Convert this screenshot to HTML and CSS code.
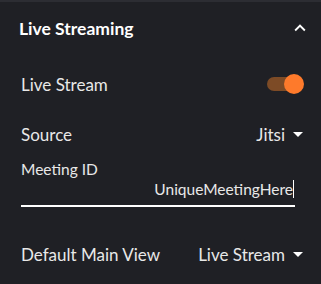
FILE: index.html
```html
<!DOCTYPE html>
<html>
<head>
<meta charset="utf-8">
<link rel="stylesheet" href="styles.css">
</head>
<body>
<div class="panel">
  <div class="header">
    <span class="title">Live Streaming</span>
    <svg class="chev" viewBox="0 0 24 24" width="22" height="22"><path d="M12 8l-6 6 1.41 1.41L12 10.83l4.59 4.58L18 14z" fill="#fff"/></svg>
  </div>
  <div class="row">
    <span class="label">Live Stream</span>
    <div class="switch"><div class="track"></div><div class="thumb"></div></div>
  </div>
  <div class="row">
    <span class="label">Source</span>
    <div class="select"><span>Jitsi</span><svg viewBox="0 0 24 24" width="24" height="24"><path d="M7 10l5 5 5-5z" fill="#fff"/></svg></div>
  </div>
  <div class="field">
    <div class="field-label">Meeting ID</div>
    <div class="field-input"><span>UniqueMeetingHere</span><span class="cursor"></span></div>
  </div>
  <div class="row last">
    <span class="label">Default Main View</span>
    <div class="select"><span>Live Stream</span><svg viewBox="0 0 24 24" width="24" height="24"><path d="M7 10l5 5 5-5z" fill="#fff"/></svg></div>
  </div>
</div>
</body>
</html>
```
FILE: styles.css
```css
html, body {
  margin: 0;
  padding: 0;
  background: #1f2025;
}
body {
  font-family: Lato, "Noto Sans", sans-serif;
  color: #e8e8e8;
  width: 321px;
  height: 284px;
  overflow: hidden;
}
.panel {
  border-top: 2px solid #2c2d33;
}
.header {
  height: 52px;
  display: flex;
  align-items: center;
  justify-content: space-between;
  padding: 0 10px 0 19px;
  margin-bottom: 5px;
}
.title {
  font-weight: 700;
  font-size: 17.5px;
  color: #fff;
}
.chev { display: block; }
.row {
  height: 50px;
  display: flex;
  align-items: center;
  justify-content: space-between;
  padding: 0 11px 0 21px;
  font-size: 17px;
}
.switch {
  position: relative;
  width: 37px;
  height: 20px;
  margin-right: 6px;
}
.track {
  position: absolute;
  left: 0;
  top: 3px;
  width: 34px;
  height: 14px;
  border-radius: 7px;
  background: #7d4b26;
}
.thumb {
  position: absolute;
  right: 0;
  top: 0;
  width: 20px;
  height: 20px;
  border-radius: 50%;
  background: #fe7a2b;
}
.select {
  display: flex;
  align-items: center;
}
.select svg { display: block; margin-left: 1px; }
.field {
  margin: 0 26px 0 21px;
}
.field-label {
  font-size: 15.5px;
  line-height: 18px;
  padding-top: 1px;
}
.field-input {
  display: flex;
  justify-content: flex-end;
  align-items: center;
  font-size: 15.5px;
  line-height: 20px;
  margin-top: 1px;
  padding: 0 1px 6px 0;
  border-bottom: 2px solid #fff;
}
.cursor {
  width: 1px;
  height: 18px;
  background: #fff;
  margin-left: 0;
}
.row.last {
  margin-top: 22px;
}
```
